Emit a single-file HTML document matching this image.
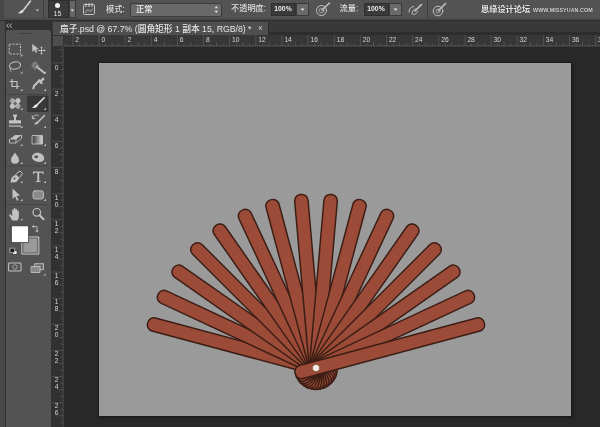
<!DOCTYPE html>
<html lang="zh"><head><meta charset="utf-8"><title>扇子.psd</title>
<style>
html,body{margin:0;padding:0}
body{opacity:0.999;width:600px;height:427px;overflow:hidden;background:#282828;position:relative;font-family:"Liberation Sans","Noto Sans CJK SC",sans-serif;font-size:8.2px;color:#cfcfcf;line-height:1}
.a{position:absolute}
.t{position:absolute;white-space:nowrap}
#opt{left:0;top:0;width:600px;height:21px;background:linear-gradient(#535353 0,#535353 18.5px,#494949 18.5px,#494949 20.3px,#2e2e2e 20.3px)}
#tabs{left:0;top:21px;width:600px;height:14px;background:linear-gradient(#393939 0,#393939 10.5px,#2d2d2d 11px)}
#tab{left:52.5px;top:21.5px;width:215.5px;height:13px;background:#4f4f4f;border-right:1px solid #2c2c2c}
#left{left:0;top:21px;width:52px;height:406px;background:#2e2e2e}
#tb{left:5.5px;top:30px;width:45px;height:398px;background:#535353;border-radius:2px 2px 0 0}
#tbh{left:5px;top:21px;width:47px;height:9px;background:#323232}
#lstrip{left:0;top:21px;width:5px;height:406px;background:#484848}
#rh{left:52px;top:34.5px;width:548px;height:12px;background:#373737}
#rv{left:50.5px;top:35px;width:13.5px;height:392px;background:#313131}
#rc{left:52.5px;top:35.5px;width:10.5px;height:10.5px;background:#4e4e4e;box-shadow:0 0 0 1px #333}
#cv{left:99px;top:63px;width:472px;height:353px;background:#9a9a9a;box-shadow:0 0 0 1px #1b1b1b,1px 1px 2px 1px #1e1e1e}
.cj{font-weight:500;color:#dedede}
.in{position:absolute;background:#3a3a3a;border:1px solid #2f2f2f;box-sizing:border-box}
.btn{position:absolute;background:#6a6a6a;border:1px solid #3a3a3a;box-sizing:border-box}
</style></head><body>

<div class="a" id="opt"></div>
<div class="a" id="tabs"></div><div class="a" id="tab"></div>
<div class="a" id="left"></div><div class="a" id="lstrip"></div><div class="a" id="tbh"></div><div class="a" id="tb"></div>
<div class="a" id="rh"></div><div class="a" id="rv"></div><div class="a" id="rc"></div>
<div class="a" id="cv"></div>
<div class="a" style="left:0;top:0;width:4px;height:20px;background:#474747"></div>
<div class="a" style="left:43px;top:1px;width:1px;height:18px;background:#3c3c3c"></div>
<div class="in" style="left:48px;top:0px;width:21px;height:18px;background:#3a3a3a"></div>
<div class="a" style="left:55px;top:2.5px;width:5px;height:5px;border-radius:50%;background:#f2f2f2"></div>
<div class="t" style="left:53.5px;top:9.5px;font-size:7px;color:#e0e0e0">15</div>
<div class="btn" style="left:69px;top:0px;width:7px;height:18px;background:#666"></div>
<div class="t cj" style="left:106px;top:5.5px">模式:</div>
<div class="btn" style="left:130px;top:2.5px;width:92px;height:14px;background:#6a6a6a;border-color:#3c3c3c;border-radius:2px"></div>
<div class="t cj" style="left:136px;top:5.5px;color:#ededed">正常</div>
<div class="t cj" style="left:231px;top:5.2px">不透明度:</div>
<div class="in" style="left:270.5px;top:2.5px;width:25px;height:13.5px"></div>
<div class="t" style="left:274.3px;top:6px;font-size:6.8px;font-weight:bold;color:#ececec">100%</div>
<div class="btn" style="left:295.5px;top:2.5px;width:13px;height:13.5px"></div>
<div class="t cj" style="left:339.5px;top:5.2px">流量:</div>
<div class="in" style="left:363.5px;top:2.5px;width:25px;height:13.5px"></div>
<div class="t" style="left:367.3px;top:6px;font-size:6.8px;font-weight:bold;color:#ececec">100%</div>
<div class="btn" style="left:388.5px;top:2.5px;width:13px;height:13.5px"></div>
<div class="a" style="left:427px;top:1px;width:1px;height:18px;background:#3c3c3c"></div>
<div class="t" style="left:481px;top:6px;font-size:8.2px;font-weight:bold;color:#e8e8e8;text-shadow:0 0 1px #222">思缘设计论坛</div>
<div class="t" style="left:533px;top:7.5px;font-size:5.4px;letter-spacing:0.05px;font-weight:bold;color:#d8d8d8;text-shadow:0 0 1px #222">WWW.MISSYUAN.COM</div>
<div class="t" style="left:60px;top:25px;color:#e6e6e6;font-size:8.72px;font-weight:500">扇子.psd @ 67.7% (圆角矩形 1 副本 15, RGB/8) *</div>
<div class="t" style="left:258px;top:24.8px;color:#c8c8c8">×</div>
<svg class="a" style="left:0;top:0" width="600" height="427" viewBox="0 0 600 427">
<path d="M72.9 35V46M99.0 35V46M125.1 35V46M151.3 35V46M177.4 35V46M203.6 35V46M229.7 35V46M255.8 35V46M282.0 35V46M308.1 35V46M334.3 35V46M360.4 35V46M386.5 35V46M412.7 35V46M438.8 35V46M465.0 35V46M491.1 35V46M517.2 35V46M543.4 35V46M569.5 35V46M595.7 35V46M66.3 43.5V46M79.4 43.5V46M85.9 42V46M92.5 43.5V46M105.5 43.5V46M112.1 42V46M118.6 43.5V46M131.7 43.5V46M138.2 42V46M144.7 43.5V46M157.8 43.5V46M164.3 42V46M170.9 43.5V46M184.0 43.5V46M190.5 42V46M197.0 43.5V46M210.1 43.5V46M216.6 42V46M223.2 43.5V46M236.2 43.5V46M242.8 42V46M249.3 43.5V46M262.4 43.5V46M268.9 42V46M275.4 43.5V46M288.5 43.5V46M295.1 42V46M301.6 43.5V46M314.7 43.5V46M321.2 42V46M327.7 43.5V46M340.8 43.5V46M347.3 42V46M353.9 43.5V46M366.9 43.5V46M373.5 42V46M380.0 43.5V46M393.1 43.5V46M399.6 42V46M406.1 43.5V46M419.2 43.5V46M425.8 42V46M432.3 43.5V46M445.4 43.5V46M451.9 42V46M458.4 43.5V46M471.5 43.5V46M478.0 42V46M484.6 43.5V46M497.6 43.5V46M504.2 42V46M510.7 43.5V46M523.8 43.5V46M530.3 42V46M536.8 43.5V46M549.9 43.5V46M556.5 42V46M563.0 43.5V46M576.1 43.5V46M582.6 42V46M589.1 43.5V46M52 63.0H63M52 89.1H63M52 115.3H63M52 141.4H63M52 167.6H63M52 193.7H63M52 219.8H63M52 246.0H63M52 272.1H63M52 298.3H63M52 324.4H63M52 350.5H63M52 376.7H63M52 402.8H63M59 49.9H63M60.5 56.5H63M60.5 69.5H63M59 76.1H63M60.5 82.6H63M60.5 95.7H63M59 102.2H63M60.5 108.7H63M60.5 121.8H63M59 128.3H63M60.5 134.9H63M60.5 148.0H63M59 154.5H63M60.5 161.0H63M60.5 174.1H63M59 180.6H63M60.5 187.2H63M60.5 200.2H63M59 206.8H63M60.5 213.3H63M60.5 226.4H63M59 232.9H63M60.5 239.4H63M60.5 252.5H63M59 259.1H63M60.5 265.6H63M60.5 278.7H63M59 285.2H63M60.5 291.7H63M60.5 304.8H63M59 311.3H63M60.5 317.9H63M60.5 330.9H63M59 337.5H63M60.5 344.0H63M60.5 357.1H63M59 363.6H63M60.5 370.1H63M60.5 383.2H63M59 389.8H63M60.5 396.3H63M60.5 409.4H63M59 415.9H63M60.5 422.4H63" stroke="#777" stroke-width="0.5" fill="none" opacity="0.8"/>
<path d="M64 45.8H600M63 47V427" stroke="#6e6e6e" stroke-width="0.7" stroke-dasharray="1.1 0.55" fill="none"/>
<g font-family="Liberation Sans, sans-serif" font-size="6.6" fill="#d6d6d6">
<text x="75.3" y="42.3" font-size="6.7">2</text>
<text x="101.4" y="42.3" font-size="6.7">0</text>
<text x="127.5" y="42.3" font-size="6.7">2</text>
<text x="153.7" y="42.3" font-size="6.7">4</text>
<text x="179.8" y="42.3" font-size="6.7">6</text>
<text x="206.0" y="42.3" font-size="6.7">8</text>
<text x="232.1" y="42.3" font-size="6.7">10</text>
<text x="258.2" y="42.3" font-size="6.7">12</text>
<text x="284.4" y="42.3" font-size="6.7">14</text>
<text x="310.5" y="42.3" font-size="6.7">16</text>
<text x="336.7" y="42.3" font-size="6.7">18</text>
<text x="362.8" y="42.3" font-size="6.7">20</text>
<text x="388.9" y="42.3" font-size="6.7">22</text>
<text x="415.1" y="42.3" font-size="6.7">24</text>
<text x="441.2" y="42.3" font-size="6.7">26</text>
<text x="467.4" y="42.3" font-size="6.7">28</text>
<text x="493.5" y="42.3" font-size="6.7">30</text>
<text x="519.6" y="42.3" font-size="6.7">32</text>
<text x="545.8" y="42.3" font-size="6.7">34</text>
<text x="571.9" y="42.3" font-size="6.7">36</text>
<text x="598.1" y="42.3" font-size="6.7">38</text>
<text x="54.8" y="70.3">0</text>
<text x="54.8" y="96.3">2</text>
<text x="54.8" y="122.2">4</text>
<text x="54.8" y="148.2">6</text>
<text x="54.8" y="174.1">8</text>
<text x="54.8" y="200.1">1</text>
<text x="54.8" y="207.4">0</text>
<text x="54.8" y="226.1">1</text>
<text x="54.8" y="233.4">2</text>
<text x="54.8" y="252.0">1</text>
<text x="54.8" y="259.3">4</text>
<text x="54.8" y="278.0">1</text>
<text x="54.8" y="285.3">6</text>
<text x="54.8" y="303.9">1</text>
<text x="54.8" y="311.2">8</text>
<text x="54.8" y="329.9">2</text>
<text x="54.8" y="337.2">0</text>
<text x="54.8" y="355.9">2</text>
<text x="54.8" y="363.2">2</text>
<text x="54.8" y="381.8">2</text>
<text x="54.8" y="389.1">4</text>
<text x="54.8" y="407.8">2</text>
<text x="54.8" y="415.1">6</text>
</g>
<defs><filter id="bl" x="-5%" y="-5%" width="110%" height="110%"><feGaussianBlur stdDeviation="0.45"/></filter></defs>
<g transform="translate(316,368)" filter="url(#bl)">
<rect x="-21.5" y="-6.7" width="195.7" height="13.4" rx="6.2" ry="6.2" fill="#9b4c37" stroke="#3e1f16" stroke-width="1.5" transform="rotate(-165)"/>
<rect x="-21.5" y="-6.7" width="195.7" height="13.4" rx="6.2" ry="6.2" fill="#9b4c37" stroke="#3e1f16" stroke-width="1.5" transform="rotate(-155)"/>
<rect x="-21.5" y="-6.7" width="195.7" height="13.4" rx="6.2" ry="6.2" fill="#9b4c37" stroke="#3e1f16" stroke-width="1.5" transform="rotate(-145)"/>
<rect x="-21.5" y="-6.7" width="195.7" height="13.4" rx="6.2" ry="6.2" fill="#9b4c37" stroke="#3e1f16" stroke-width="1.5" transform="rotate(-135)"/>
<rect x="-21.5" y="-6.7" width="195.7" height="13.4" rx="6.2" ry="6.2" fill="#9b4c37" stroke="#3e1f16" stroke-width="1.5" transform="rotate(-125)"/>
<rect x="-21.5" y="-6.7" width="195.7" height="13.4" rx="6.2" ry="6.2" fill="#9b4c37" stroke="#3e1f16" stroke-width="1.5" transform="rotate(-115)"/>
<rect x="-21.5" y="-6.7" width="195.7" height="13.4" rx="6.2" ry="6.2" fill="#9b4c37" stroke="#3e1f16" stroke-width="1.5" transform="rotate(-105)"/>
<rect x="-21.5" y="-6.7" width="195.7" height="13.4" rx="6.2" ry="6.2" fill="#9b4c37" stroke="#3e1f16" stroke-width="1.5" transform="rotate(-95)"/>
<rect x="-21.5" y="-6.7" width="195.7" height="13.4" rx="6.2" ry="6.2" fill="#9b4c37" stroke="#3e1f16" stroke-width="1.5" transform="rotate(-85)"/>
<rect x="-21.5" y="-6.7" width="195.7" height="13.4" rx="6.2" ry="6.2" fill="#9b4c37" stroke="#3e1f16" stroke-width="1.5" transform="rotate(-75)"/>
<rect x="-21.5" y="-6.7" width="195.7" height="13.4" rx="6.2" ry="6.2" fill="#9b4c37" stroke="#3e1f16" stroke-width="1.5" transform="rotate(-65)"/>
<rect x="-21.5" y="-6.7" width="195.7" height="13.4" rx="6.2" ry="6.2" fill="#9b4c37" stroke="#3e1f16" stroke-width="1.5" transform="rotate(-55)"/>
<rect x="-21.5" y="-6.7" width="195.7" height="13.4" rx="6.2" ry="6.2" fill="#9b4c37" stroke="#3e1f16" stroke-width="1.5" transform="rotate(-45)"/>
<rect x="-21.5" y="-6.7" width="195.7" height="13.4" rx="6.2" ry="6.2" fill="#9b4c37" stroke="#3e1f16" stroke-width="1.5" transform="rotate(-35)"/>
<rect x="-21.5" y="-6.7" width="195.7" height="13.4" rx="6.2" ry="6.2" fill="#9b4c37" stroke="#3e1f16" stroke-width="1.5" transform="rotate(-25)"/>
<rect x="-21.5" y="-6.7" width="195.7" height="13.4" rx="6.2" ry="6.2" fill="#9b4c37" stroke="#3e1f16" stroke-width="1.5" transform="rotate(-15)"/>
<circle cx="0" cy="0" r="3.6" fill="#f8f0e6" stroke="#6b3a2a" stroke-width="0.6"/>
</g>
<rect x="27.5" y="96" width="20.5" height="15.5" rx="1.5" fill="#383838" stroke="#2c2c2c" stroke-width="0.6"/>
<defs><filter id="bi" x="-2%" y="-2%" width="104%" height="104%"><feGaussianBlur stdDeviation="0.3"/></filter></defs>
<g fill="none" stroke="#c2c2c2" stroke-width="1" stroke-linecap="round" stroke-linejoin="round" filter="url(#bi)">
<path d="M20 33.5H32" stroke="#3c3c3c" stroke-width="1"/>
<path d="M8.5 24L6.5 25.7L8.5 27.4M11.5 24L9.5 25.7L11.5 27.4" stroke="#bdbdbd" stroke-width="0.9"/>
<path d="M7 94.5H48" stroke="#444" stroke-width="1"/>
<path d="M7 166H48" stroke="#444" stroke-width="1"/>
<path d="M7 204.5H48" stroke="#444" stroke-width="1"/>
<path d="M22.3 56.3h-2.2l2.2-2.2z" fill="#c2c2c2" stroke="none"/>
<path d="M22.5 73.5h-2.2l2.2-2.2z" fill="#c2c2c2" stroke="none"/>
<path d="M46 73.5h-2.2l2.2-2.2z" fill="#c2c2c2" stroke="none"/>
<path d="M22.5 91h-2.2l2.2-2.2z" fill="#c2c2c2" stroke="none"/>
<path d="M46 91h-2.2l2.2-2.2z" fill="#c2c2c2" stroke="none"/>
<path d="M22.5 110h-2.2l2.2-2.2z" fill="#c2c2c2" stroke="none"/>
<path d="M46 110h-2.2l2.2-2.2z" fill="#c2c2c2" stroke="none"/>
<path d="M22.5 128h-2.2l2.2-2.2z" fill="#c2c2c2" stroke="none"/>
<path d="M46 128h-2.2l2.2-2.2z" fill="#c2c2c2" stroke="none"/>
<path d="M22.5 146h-2.2l2.2-2.2z" fill="#c2c2c2" stroke="none"/>
<path d="M46 146h-2.2l2.2-2.2z" fill="#c2c2c2" stroke="none"/>
<path d="M22.5 164h-2.2l2.2-2.2z" fill="#c2c2c2" stroke="none"/>
<path d="M46 164h-2.2l2.2-2.2z" fill="#c2c2c2" stroke="none"/>
<path d="M22.5 183h-2.2l2.2-2.2z" fill="#c2c2c2" stroke="none"/>
<path d="M46 183h-2.2l2.2-2.2z" fill="#c2c2c2" stroke="none"/>
<path d="M22.5 201h-2.2l2.2-2.2z" fill="#c2c2c2" stroke="none"/>
<path d="M46 201h-2.2l2.2-2.2z" fill="#c2c2c2" stroke="none"/>
<path d="M22.5 220.5h-2.2l2.2-2.2z" fill="#c2c2c2" stroke="none"/>
<path d="M45.5 275.5h-2.2l2.2-2.2z" fill="#c2c2c2" stroke="none"/>
<rect x="9.200" y="44.200" width="11.300" height="9.800" stroke-dasharray="2 1.300" stroke-linecap="butt"/>
<path d="M32.500 44.500L32.500 51.500L34.500 49.700L35.800 52.500L37 52L35.700 49.200L38.200 49Z" fill="#c2c2c2" stroke-width="0.5"/>
<path d="M41.500 47.500v6M38.500 50.500h6" stroke-width="0.900"/>
<path d="M41.500 46.300l-1.200 1.600h2.400zM41.500 54.700l-1.200-1.600h2.400zM45.700 50.500l-1.600-1.200v2.400z" fill="#c2c2c2" stroke="none"/>
<ellipse cx="15" cy="65.5" rx="5.6" ry="3.6" transform="rotate(-12 15 65.5)" stroke-width="1.1"/>
<path d="M11 68.2c-1 .8-1.2 2.3 0 3.2" stroke-width="0.9"/>
<path d="M36.5 66.5L44.5 73" stroke-width="1.8"/>
<path d="M35 61.8v2.2M35 67.6v1.6M32 65.3h1.8M36.8 65.3h1.6M32.9 63.2l1.2 1.2M37.2 63.2l-1.1 1.1M33 67.6l1.1-1.1" stroke-width="0.8"/>
<path d="M12 79V86.500H19.500M9.500 81.500H17V89" stroke-width="1.200" stroke-linecap="butt"/>
<path d="M33.200 88.300L34.200 85.800L39.500 80.500" stroke-width="2"/>
<path d="M39 80.5L41.5 83M40.3 81.7L43.2 78.8" stroke-width="2.4" />
<rect x="8.7" y="101" width="13" height="5" rx="2.5" transform="rotate(-45 15.2 103.5)" fill="#c2c2c2" stroke="none"/>
<rect x="8.7" y="101" width="13" height="5" rx="2.5" transform="rotate(45 15.2 103.5)" fill="#c2c2c2" stroke="none" opacity="0.75"/>
<rect x="13.6" y="101.9" width="3.2" height="3.2" transform="rotate(45 15.2 103.5)" fill="#6a6a6a" stroke="none"/>
<path d="M44.2 97.8L37.2 104.8" stroke-width="1.6" stroke="#e6e6e6"/>
<path d="M36.8 104.4c-2.2-.6-2.7 2.6-4.6 3 2.6 1.4 5.8-.4 5.4-2.2z" fill="#e6e6e6" stroke="none"/>
<path d="M13 114.5h4v1.8l-1 1v3h5v3.2H9v-3.200h5v-3l-1-1z" fill="#c2c2c2" stroke="none"/>
<path d="M9 126H21" stroke-width="1.2" stroke-linecap="butt"/>
<path d="M44.5 115.5L38.5 121.5" stroke-width="1.5"/>
<path d="M38 121.2c-2-.5-2.6 2.4-4.300 2.800 2.400 1.300 5.300-.4 5-2z" fill="#c2c2c2" stroke="none"/>
<path d="M32.5 118.5c.6-2.600 3.400-4 5.800-3.200M32.300 115.800v2.900h2.700" stroke-width="0.9"/>
<path d="M9.500 139.500l5.500-4.500h6.500l-5.500 4.500z" fill="#c2c2c2" stroke="none"/>
<path d="M9.500 139.500v3.500h6.500v-3.500M16 143l5.500-4.500V135" stroke-width="0.9"/>
<defs><linearGradient id="gr" x1="0" x2="1" y1="0" y2="0"><stop offset="0" stop-color="#3c3c3c"/><stop offset="1" stop-color="#d8d8d8"/></linearGradient></defs>
<rect x="32.500" y="135.500" width="10" height="8.500" fill="url(#gr)" stroke-width="0.9"/>
<path d="M15 152.500c1.600 2.700 4 5 4 7.300a4 4 0 0 1-8 0c0-2.300 2.400-4.600 4-7.300z" fill="#c2c2c2" stroke="none"/>
<path d="M32 157c0-2.600 2.600-4.200 5.400-4.200 3.600 0 6.800 2.600 6.800 5.600 0 2.400-2.600 3.800-5.200 3.600-3.400-.2-7-2.200-7-5z" fill="#c2c2c2" stroke="none"/>
<ellipse cx="36.200" cy="156.800" rx="2" ry="1.400" fill="#505050" stroke="none"/>
<path d="M10.500 182.500l1-4.800 4.300-3.500 3.800 3.800-3.500 4.300z" fill="#c2c2c2" stroke="none"/>
<path d="M16.500 173.500l3.500-2.500 2.500 2.500-2.500 3.500" stroke-width="1"/>
<circle cx="14.600" cy="178.400" r="1" fill="#535353" stroke="none"/>
<path d="M33 171.500h10.500v2.800h-.8l-.5-1.600h-3v8.300l1.600.4v.7h-5.100v-.7l1.600-.4v-8.300h-3l-.5 1.600h-.8z" fill="#c2c2c2" stroke="none"/>
<path d="M12.500 188.500L12.500 199L15 196.500L17 200.800L18.600 200L16.600 195.900L20 195.500Z" fill="#c2c2c2" stroke="none"/>
<rect x="33" y="190.800" width="10.500" height="8.200" rx="2" fill="#8a8a8a" stroke-width="0.9"/>
<path d="M12.500 220.500c-1.200-1.800-2.600-3.600-3.200-5-.4-1 .8-1.600 1.600-.8l1.300 1.500v-6c0-1.200 1.500-1.200 1.600 0v-1.300c0-1.200 1.600-1.200 1.700 0v1c0-1.200 1.600-1.200 1.700 0v1.400c0-1.100 1.500-1.100 1.600 0v5.200c0 1.600-.6 2.800-1.200 4z" fill="#c2c2c2" stroke="none"/>
<circle cx="36.800" cy="212.300" r="3.800" stroke-width="1.200"/>
<path d="M39.700 215.300L43.500 219.300" stroke-width="2"/>
<path d="M33.500 226.500h3.500v4.500" stroke-width="0.9"/>
<path d="M34 224.700l-2 1.800 2 1.800zM35.200 230.500l1.800 2 1.800-2z" fill="#c2c2c2" stroke="none"/>
<rect x="22.300" y="237" width="16.500" height="17" fill="#9a9a9a" stroke="#dadada" stroke-width="1"/>
<rect x="23.300" y="238" width="14.500" height="15" fill="none" stroke="#4a4a4a" stroke-width="0.8"/>
<rect x="11.600" y="225.800" width="17" height="16.800" fill="#ffffff" stroke="#333" stroke-width="0.8"/>
<rect x="13" y="250.500" width="4" height="4" fill="#e8e8e8" stroke="#222" stroke-width="0.600"/>
<rect x="10.300" y="248.200" width="4.300" height="4.300" fill="#1a1a1a" stroke="#ddd" stroke-width="0.600"/>
<rect x="9" y="263" width="12" height="8" stroke-width="1"/>
<circle cx="15" cy="267" r="2.200" stroke-width="0.800" stroke-dasharray="1 .7"/>
<rect x="35" y="263.700" width="8.500" height="6" fill="#6e6e6e" stroke-width="0.900"/>
<rect x="31.500" y="266.500" width="8.500" height="6" fill="#8a8a8a" stroke-width="0.900"/>
<path d="M30.500 1L23.300 10.200" stroke-width="1.400" stroke="#d8d8d8"/>
<path d="M22.800 10c-2.300-.6-2.900 2.600-5 3 2.800 1.400 6.100-.3 5.800-2.200z" fill="#d8d8d8" stroke="none"/>
<path d="M35.500 9.500h3.600l-1.800 2z" fill="#c2c2c2" stroke="none"/>
<path d="M70.500 9.500h3.600l-1.800 2z" fill="#e8e8e8" stroke="none"/>
<rect x="83.500" y="4.500" width="11" height="10" rx="1" stroke-width="1"/>
<path d="M86 3.500v3M89 3.500v3M92 3.500v3" stroke-width="1.200"/>
<path d="M85.500 12.500c1-2.500 2.500-3.500 3.500-2s2 1 3.500-1.500" stroke-width="0.900"/>
<path d="M214.500 8.300l1.800-2.200 1.800 2.200zM214.500 10.700l1.800 2.200 1.800-2.200z" fill="#e0e0e0" stroke="none"/>
<path d="M300.700 8.500h3.800l-1.900 2.200z" fill="#e8e8e8" stroke="none"/>
<path d="M393.700 8.500h3.800l-1.900 2.200z" fill="#e8e8e8" stroke="none"/>
<circle cx="321.500" cy="10.500" r="5" stroke-width="1"/>
<circle cx="321.500" cy="10.500" r="2.300" stroke-width="0.700"/>
<path d="M322 10L329.500 3" stroke-width="1.600"/>
<path d="M409 12c0-3 2-5.500 4.500-5.500M412 13.500c0-2.500 1.500-4.500 4-4.500" stroke-width="1"/>
<path d="M415 11L421.500 4.500" stroke-width="1.600"/>
<path d="M413 14.500c2 .5 4-1 4.500-3" stroke-width="0.900"/>
<circle cx="438" cy="11" r="4.800" stroke-width="1"/>
<circle cx="438" cy="11" r="2" stroke-width="0.700"/>
<path d="M438.500 10.500L445.500 3.500" stroke-width="1.600"/>
</g>
</svg>
</body></html>
